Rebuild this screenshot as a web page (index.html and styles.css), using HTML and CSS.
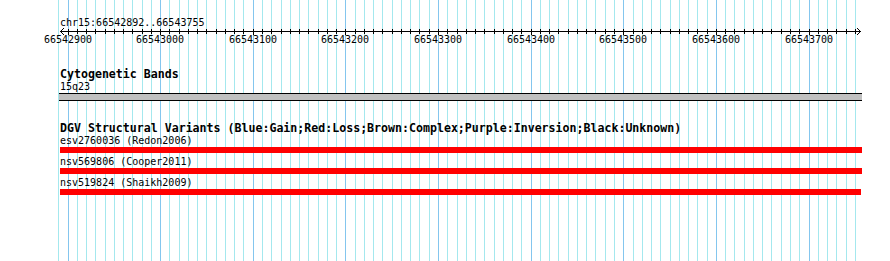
FILE: index.html
```html
<!DOCTYPE html>
<html>
<head>
    <meta name="viewport" content="width=device-width, initial-scale=1.0">
    <link rel="stylesheet" href="styles.css">
</head>
<body>
    <div class="panel">
        <svg class="grid" id="grid" width="890" height="261"></svg>

        <div class="tracks">
            <div class="position">chr15:66542892..66543755</div>

            <svg class="ruler" id="ruler" width="890" height="39">
                <path class="axis" d="M60 2.5 H861" />
                <path class="axis" d="M64 -1 L60.5 2.5 L64 6" />
                <path class="axis" d="M857 -1 L860.5 2.5 L857 6" />
            </svg>

            <section class="track">
                <h3 class="track-title">Cytogenetic Bands</h3>
                <div class="feature-label">15q23</div>
                <div class="band"></div>
            </section>

            <section class="track dgv">
                <h3 class="track-title">DGV Structural Variants (Blue:Gain;Red:Loss;Brown:Complex;Purple:Inversion;Black:Unknown)</h3>
                <div class="feature">
                    <div class="feature-label">esv2760036 (Redon2006)</div>
                    <div class="sv-bar loss"></div>
                </div>
                <div class="feature">
                    <div class="feature-label">nsv569806 (Cooper2011)</div>
                    <div class="sv-bar loss"></div>
                </div>
                <div class="feature">
                    <div class="feature-label">nsv519824 (Shaikh2009)</div>
                    <div class="sv-bar loss short"></div>
                </div>
            </section>
        </div>
    </div>

    <script>
        const NS = 'http://www.w3.org/2000/svg';
        const origin = 67.5;         // x of 66542900
        const step = 9.2625;         // pixels per 10 bp
        const startBp = 66542900;

        function px(k) {
            return Math.round(origin + step * k) + 0.5;
        }

        function addLine(parent, x, y1, y2, cls) {
            const line = document.createElementNS(NS, 'line');
            line.setAttribute('x1', x);
            line.setAttribute('x2', x);
            line.setAttribute('y1', y1);
            line.setAttribute('y2', y2);
            line.setAttribute('class', cls);
            parent.appendChild(line);
        }

        // Grid lines behind the tracks
        const grid = document.getElementById('grid');
        for (let k = -1; k <= 85; k++) {
            addLine(grid, px(k), 0, 261, k % 10 === 0 ? 'major' : 'minor');
        }

        // Ruler ticks and labels
        const ruler = document.getElementById('ruler');
        for (let k = 0; k <= 85; k++) {
            const major = k % 10 === 0;
            addLine(ruler, px(k), 0, major ? 6 : 5, 'tick');
            if (major) {
                const label = document.createElementNS(NS, 'text');
                label.setAttribute('x', px(k) - 0.5);
                label.setAttribute('y', 14);
                label.setAttribute('class', 'tick-label');
                label.textContent = startBp + k * 10;
                ruler.appendChild(label);
            }
        }
    </script>
</body>
</html>
```

FILE: styles.css
```css
body {
    margin: 0;
    background: #fff;
    color: #000;
    font-family: "DejaVu Sans Mono", "Liberation Mono", monospace;
}

.panel {
    position: relative;
    width: 890px;
    height: 261px;
    overflow: hidden;
}

.grid {
    position: absolute;
    top: 0;
    left: 0;
}

.grid line {
    stroke-width: 1;
    shape-rendering: crispEdges;
}

.grid .minor {
    stroke: #a4e8ee;
}

.grid .major {
    stroke: #84c6ee;
}

.tracks {
    position: relative;
    padding: 17px 0 0 60px;
}

.position {
    font-size: 10px;
    line-height: 12px;
}

.ruler {
    display: block;
    margin-left: -60px;
    overflow: visible;
}

.ruler .axis {
    fill: none;
    stroke: #000;
    stroke-width: 1;
}

.ruler .tick {
    stroke: #000;
    stroke-width: 1;
    shape-rendering: crispEdges;
}

.tick-label {
    font-family: "DejaVu Sans Mono", "Liberation Mono", monospace;
    font-size: 10px;
    text-anchor: middle;
    fill: #000;
}

.track-title {
    margin: 0;
    font-size: 11.6px;
    font-weight: bold;
    line-height: 13px;
    white-space: nowrap;
}

.feature-label {
    font-size: 10px;
    line-height: 12px;
    white-space: nowrap;
}

.band {
    width: 803px;
    height: 6px;
    margin-left: -1px;
    background: #c0c0c0;
    border-top: 1px solid #000;
    border-bottom: 1px solid #000;
}

.dgv {
    margin-top: 21px;
}

.feature + .feature {
    margin-top: 3px;
}

.sv-bar {
    width: 802px;
    height: 6px;
}

.sv-bar.loss {
    background: #ff0000;
}

.sv-bar.short {
    width: 801px;
}
```
